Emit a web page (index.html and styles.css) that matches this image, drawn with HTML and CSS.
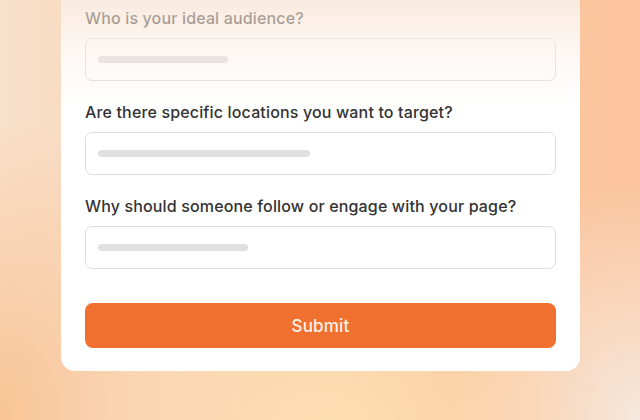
FILE: index.html
```html
<!DOCTYPE html>
<html>
<head>
<meta charset="utf-8">
<link rel="stylesheet" href="styles.css">
</head>
<body>
<div class="page">
  <form class="card">
    <div class="fade"></div>
    <div class="field">
      <label class="label">Who is your ideal audience?</label>
      <div class="input"><span class="ph ph1"></span></div>
    </div>
    <div class="field">
      <label class="label">Are there specific locations you want to target?</label>
      <div class="input"><span class="ph ph2"></span></div>
    </div>
    <div class="field">
      <label class="label">Why should someone follow or engage with your page?</label>
      <div class="input"><span class="ph ph3"></span></div>
    </div>
    <button type="button" class="submit">Submit</button>
  </form>
</div>
</body>
</html>
```
FILE: styles.css
```css
html, body {
  margin: 0;
  padding: 0;
}
body {
  width: 640px;
  height: 420px;
  overflow: hidden;
  font-family: Inter, "Noto Sans", sans-serif;
}
.page {
  width: 640px;
  height: 420px;
  box-sizing: border-box;
  padding-left: 61px;
  background:
    radial-gradient(ellipse 260px 200px at 330px 430px, rgba(253, 224, 178, 0.95), rgba(253, 224, 178, 0) 100%),
    radial-gradient(ellipse 200px 240px at 640px 420px, rgba(246, 232, 220, 1), rgba(246, 232, 220, 0) 100%),
    radial-gradient(ellipse 180px 300px at 0px 420px, rgba(249, 196, 148, 1), rgba(249, 196, 148, 0) 100%),
    linear-gradient(90deg, #f8e0cb 0%, #f9d3b4 30%, #fbc8a0 70%, #fbc49c 100%);
}
.card {
  position: relative;
  width: 519px;
  box-sizing: border-box;
  background: #ffffff;
  border-radius: 0 0 14px 14px;
  padding: 8px 24px 23px 24px;
  display: flex;
  flex-direction: column;
  gap: 21px;
}
.fade {
  position: absolute;
  left: 0;
  top: 0;
  right: 0;
  height: 110px;
  background: linear-gradient(180deg, rgba(248, 226, 210, 0.72) 0%, rgba(250, 236, 226, 0.4) 45%, rgba(255, 255, 255, 0) 100%);
  pointer-events: none;
  z-index: 2;
}
.field {
  display: flex;
  flex-direction: column;
  gap: 10px;
}
.label {
  font-size: 16px;
  line-height: 20px;
  font-weight: 500;
  color: #333333;
  letter-spacing: 0.15px;
}
.input {
  height: 43px;
  box-sizing: border-box;
  border: 1.5px solid #dedede;
  border-radius: 7px;
  display: flex;
  align-items: center;
  padding-left: 12px;
}
.ph {
  display: block;
  height: 7px;
  border-radius: 4px;
  background: #e0e0e0;
}
.ph1 { width: 130px; }
.ph2 { width: 212px; }
.ph3 { width: 150px; }
.submit {
  margin-top: 13px;
  height: 45px;
  border: none;
  border-radius: 8px;
  background: #f07030;
  color: #fff1ea;
  font-family: Inter, "Noto Sans", sans-serif;
  font-size: 17px;
  font-weight: 500;
  letter-spacing: 0.2px;
}
```
